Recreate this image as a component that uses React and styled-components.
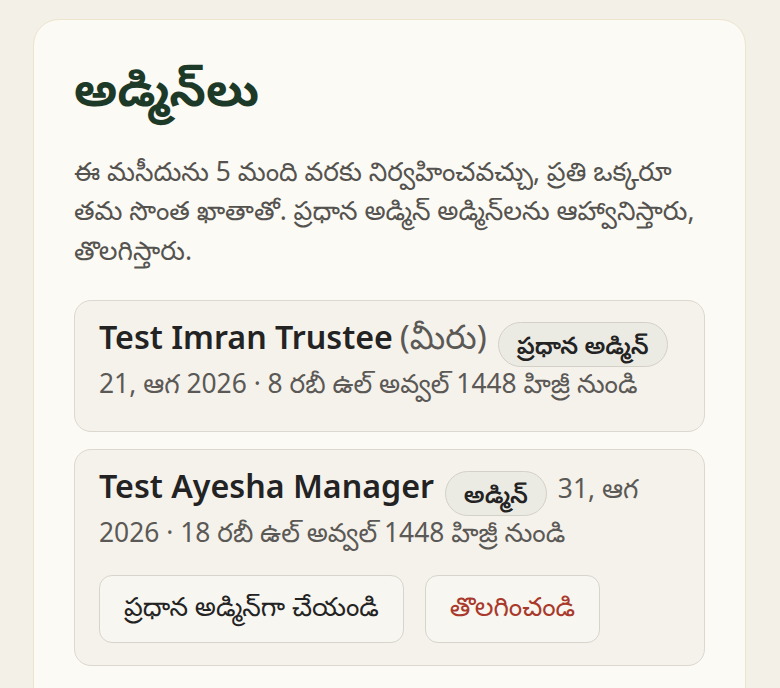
import React from "react";
import styled, { createGlobalStyle } from "styled-components";

const Global = createGlobalStyle`
  html, body { margin: 0; padding: 0; background: #f3f0e8; }
  body { font-family: "Noto Sans", "Noto Sans Telugu", sans-serif; }
`;

const Page = styled.div`
  padding: 19px 34px 0 33px;
`;

const Card = styled.section`
  background: #fcfaf4;
  border: 1.5px solid #ece4cd;
  border-radius: 26px;
  padding: 37.2px 40px 40px 40px;
  min-height: 700px;
  box-sizing: border-box;
`;

const Title = styled.h1`
  margin: 0 0 33.5px;
  font-size: 47.5px;
  font-weight: 700;
  color: #1d3a28;
  line-height: 61.1px;
`;

const Intro = styled.p`
  margin: 0 0 29.4px;
  font-size: 26.4px;
  line-height: 39.5px;
  color: #55534f;
`;

const List = styled.div`
  display: flex;
  flex-direction: column;
  gap: 17.5px;
`;

const Item = styled.div`
  background: #f5f2ec;
  border: 1.5px solid #dcd8d0;
  border-radius: 17px;
  padding: 19.4px 24px 20.5px;
`;

const Head = styled.div`
  font-size: 26.4px;
  line-height: 32px;
  padding-bottom: 11px;
  color: #5b5955;
`;

const Name = styled.span`
  font-size: 32.2px;
  font-weight: 600;
  color: #232323;
`;

const You = styled.span`
  font-size: 33.5px;
  font-weight: 400;
  color: #5b5955;
`;

const Badge = styled.span`
  display: inline-block;
  vertical-align: -5.4px;
  margin: 0 4px;
  padding: 0 18px;
  height: 43px;
  line-height: 43px;
  border-radius: 23px;
  background: #ecebe3;
  border: 1.5px solid #d3d1c7;
  font-size: 24px;
  font-weight: 600;
  color: #232323;
`;

const Actions = styled.div`
  display: flex;
  gap: 21px;
  margin: 15.7px 0 2px;
`;

const Button = styled.button`
  font-family: inherit;
  font-size: 26.4px;
  height: 68px;
  padding: 0 24px;
  border-radius: 13px;
  background: #f8f6f0;
  border: 1.5px solid #d7d4cb;
  color: ${(p) => (p.$danger ? "#a8392b" : "#232323")};
  cursor: pointer;
`;

export default function App() {
  return (
    <>
      <Global />
      <Page>
        <Card>
          <Title>అడ్మిన్‌లు</Title>
          <Intro>
            ఈ మసీదును 5 మంది వరకు నిర్వహించవచ్చు, ప్రతి ఒక్కరూ తమ సొంత ఖాతాతో.
            ప్రధాన అడ్మిన్ అడ్మిన్‌లను ఆహ్వానిస్తారు, తొలగిస్తారు.
          </Intro>
          <List>
            <Item>
              <Head>
                <Name>Test Imran Trustee</Name> <You>(మీరు)</You>{" "}
                <Badge>ప్రధాన అడ్మిన్</Badge> 21, ఆగ 2026 · 8 రబీ ఉల్ అవ్వల్ 1448
                హిజ్రీ నుండి
              </Head>
            </Item>
            <Item>
              <Head>
                <Name>Test Ayesha Manager</Name>{" "}
                <Badge>అడ్మిన్</Badge> 31, ఆగ 2026 · 18 రబీ ఉల్ అవ్వల్ 1448 హిజ్రీ
                నుండి
              </Head>
              <Actions>
                <Button>ప్రధాన అడ్మిన్‌గా చేయండి</Button>
                <Button $danger>తొలగించండి</Button>
              </Actions>
            </Item>
          </List>
        </Card>
      </Page>
    </>
  );
}
